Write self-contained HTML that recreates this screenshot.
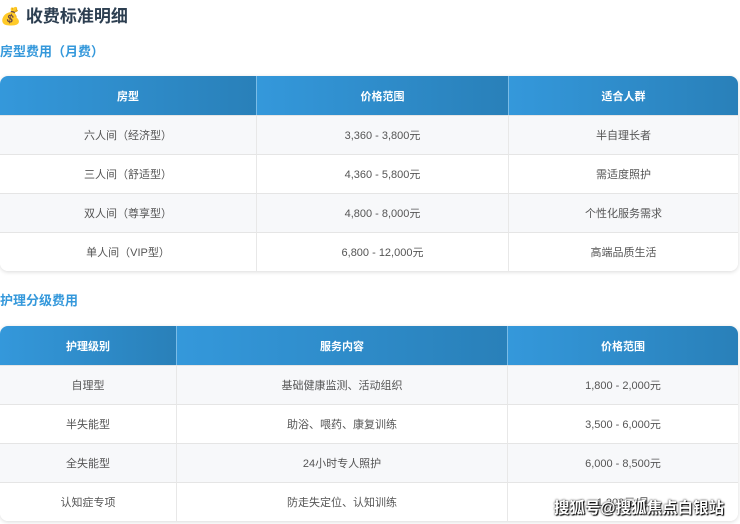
<!DOCTYPE html>
<html><head><meta charset="utf-8"><style>
body{margin:0;width:740px;height:524px;overflow:hidden;background:#fff;font-family:"Liberation Sans","Noto Sans CJK SC",sans-serif;position:relative}
h2{position:absolute;left:0;top:5px;margin:0;font-size:17px;color:#2c3e50;font-weight:bold;line-height:24px}
h3{position:absolute;left:0;margin:0;font-size:13px;color:#3498db;font-weight:bold;line-height:18px}
table{position:absolute;left:0;width:738px;border-collapse:separate;border-spacing:0;border-radius:8px;overflow:hidden;box-shadow:0 1px 4px rgba(0,0,0,.15);font-size:11px;color:#555}
th{background:linear-gradient(90deg,#3498db,#2980b9);color:#fff;font-weight:bold;height:39px;border-right:1px solid rgba(255,255,255,.35);padding:0}
td{text-align:center;height:38px;border-top:1px solid #e5e5e5;border-right:1px solid #e8e8e8;padding:0}
th:last-child,td:last-child{border-right:none}
tr:nth-child(even) td{background:#f7f8fa}
tr:nth-child(odd) td{background:#fff}
.wm{position:absolute;right:16px;top:496px;font-size:15.5px;font-weight:bold;color:#fff;text-shadow:0 0 2px #000,1px 1px 1px #000}
</style></head><body>
<h2>💰 收费标准明细</h2>
<h3 style="top:43px">房型费用（月费）</h3>
<table style="top:76px">
<tr><th style="width:256px">房型</th><th style="width:251px">价格范围</th><th>适合人群</th></tr>
<tr><td>六人间（经济型）</td><td>3,360 - 3,800元</td><td>半自理长者</td></tr>
<tr><td>三人间（舒适型）</td><td>4,360 - 5,800元</td><td>需适度照护</td></tr>
<tr><td>双人间（尊享型）</td><td>4,800 - 8,000元</td><td>个性化服务需求</td></tr>
<tr><td>单人间（VIP型）</td><td>6,800 - 12,000元</td><td>高端品质生活</td></tr>
</table>
<h3 style="top:292px">护理分级费用</h3>
<table style="top:326px">
<tr><th style="width:176px">护理级别</th><th style="width:330px">服务内容</th><th>价格范围</th></tr>
<tr><td>自理型</td><td>基础健康监测、活动组织</td><td>1,800 - 2,000元</td></tr>
<tr><td>半失能型</td><td>助浴、喂药、康复训练</td><td>3,500 - 6,000元</td></tr>
<tr><td>全失能型</td><td>24小时专人照护</td><td>6,000 - 8,500元</td></tr>
<tr><td>认知症专项</td><td>防走失定位、认知训练</td><td>1,200元/月</td></tr>
</table>
<div class="wm">搜狐号@搜狐焦点白银站</div>
</body></html>
